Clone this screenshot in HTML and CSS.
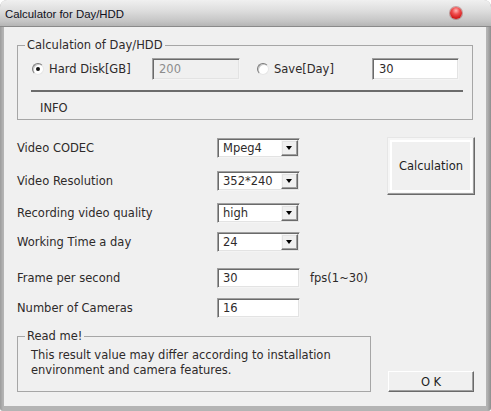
FILE: index.html
```html
<!DOCTYPE html>
<html>
<head>
<meta charset="utf-8">
<link rel="stylesheet" href="styles.css">
</head>
<body>
<div class="window">
  <div class="titlebar">
    <span class="title">Calculator for Day/HDD</span>
    <span class="close"></span>
  </div>
  <div class="content">
    <fieldset class="group calc-group">
      <legend>Calculation of Day/HDD</legend>
      <div class="radio-row">
        <label class="radio-cell first"><span class="radio checked"></span><span class="radio-text">Hard Disk[GB]</span></label>
        <div class="field disabled w88">200</div>
        <label class="radio-cell second"><span class="radio"></span><span class="radio-text">Save[Day]</span></label>
        <div class="field w87">30</div>
      </div>
      <div class="sep"></div>
      <div class="info">INFO</div>
    </fieldset>

    <div class="main">
      <div class="form">
        <div class="row r1"><span class="lbl">Video CODEC</span><div class="select"><span class="val">Mpeg4</span><span class="drop"></span></div></div>
        <div class="row r2"><span class="lbl">Video Resolution</span><div class="select"><span class="val">352*240</span><span class="drop"></span></div></div>
        <div class="row r3"><span class="lbl">Recording video quality</span><div class="select"><span class="val">high</span><span class="drop"></span></div></div>
        <div class="row r4"><span class="lbl">Working Time a day</span><div class="select"><span class="val">24</span><span class="drop"></span></div></div>
        <div class="row r5"><span class="lbl">Frame per second</span><div class="field w83">30</div><span class="unit">fps(1~30)</span></div>
        <div class="row r6"><span class="lbl">Number of Cameras</span><div class="field w83">16</div></div>
      </div>
      <button class="btn calc">Calculation</button>
    </div>

    <div class="bottom">
      <fieldset class="group readme">
        <legend>Read me!</legend>
        <p class="note">This result value may differ according to installation<br>environment and camera features.</p>
      </fieldset>
      <button class="btn ok">O K</button>
    </div>
  </div>
</div>
</body>
</html>
```

FILE: styles.css
```css
* { box-sizing: border-box; }
html, body { margin: 0; padding: 0; background: #ffffff; }
body { font-family: "DejaVu Sans", Verdana, sans-serif; font-size: 11.5px; color: #2e2a2a; }

.window {
  width: 491px;
  height: 411px;
  display: flex;
  flex-direction: column;
  background: linear-gradient(to right, #9c9c9c, #b4b4b4 3px, #b4b4b4 calc(100% - 4px), #8e8e8e);
  border-radius: 7px 7px 3px 3px;
  padding: 0 5px 5px 4px;
}

.titlebar {
  height: 27px;
  margin: 0 -5px 0 -4px;
  padding-left: 5px;
  display: flex;
  align-items: center;
  background: linear-gradient(#f0f0f0 0%, #dedede 40%, #c6c6c6 80%, #b5b5b5 100%);
  border-radius: 7px 7px 0 0;
  border-bottom: 1px solid #8a8a8a;
}
.title {
  font-family: "Liberation Sans", Arial, sans-serif;
  font-size: 11.4px;
  color: #101020;
  padding-top: 1px;
}
.close {
  margin-left: auto;
  margin-right: 29px;
  width: 12px;
  height: 12px;
  border-radius: 50%;
  background: radial-gradient(circle at 50% 30%, #ffb8b8 0%, #f05050 35%, #d01818 75%, #a00000 100%);
  box-shadow: 0 0 0 1px rgba(120, 0, 0, 0.3);
}

.content {
  flex: 1;
  background: #f0f0f0;
  padding: 11px 0 0 13px;
}

.group {
  margin: 0;
  padding: 0;
  border: 1px solid #a6a6a6;
  min-width: 0;
}
.group legend {
  margin-left: 7px;
  padding: 0 2px;
  line-height: 14px;
}
.calc-group { width: 456px; padding-top: 6px; padding-bottom: 4px; }

.radio-row {
  display: flex;
  align-items: center;
  padding-left: 14px;
  height: 22px;
}
.radio-cell { display: flex; align-items: center; }
.radio-cell.first { width: 120px; }
.radio-cell.second { width: 115px; margin-left: 17px; }
.radio {
  width: 12px;
  height: 12px;
  border-radius: 50%;
  border: 1px solid;
  border-color: #7a7a7a #e6e6e6 #e6e6e6 #7a7a7a;
  background: #fff;
  box-shadow: inset 1px 1px 0 #c8c8c8;
  position: relative;
  flex: none;
}
.radio.checked::after {
  content: "";
  position: absolute;
  left: 3px;
  top: 3px;
  width: 4px;
  height: 4px;
  border-radius: 50%;
  background: #111;
}
.radio-text { margin-left: 5px; }

.field {
  height: 22px;
  background: #fff;
  border: 1px solid;
  border-color: #a0a0a0 #f4f4f4 #f4f4f4 #a0a0a0;
  box-shadow: inset 1px 1px 0 #6a6a6a, inset -1px -1px 0 #e3e3e3;
  padding: 0 0 0 6px;
  display: flex;
  align-items: center;
  line-height: 14px;
}
.field.disabled { background: #f0f0f0; color: #8c8c8c; }
.w88 { width: 88px; }
.w87 { width: 87px; }
.w83 { width: 83px; height: 20px; padding-left: 5px; }

.sep {
  margin: 10px 0 0 13px;
  width: 432px;
  height: 2px;
  background: #6c6c6c;
}
.info {
  margin-top: 9px;
  padding-left: 22px;
  line-height: 14px;
}

.main {
  display: flex;
  margin-top: 17px;
  align-items: flex-start;
}
.form { width: 370px; }
.row { display: flex; align-items: center; height: 20px; }
.lbl { width: 200px; }
.r1 { margin-top: 1px; }
.r2 { margin-top: 13px; }
.r3 { margin-top: 12px; }
.r4 { margin-top: 9px; }
.r5 { margin-top: 16px; }
.r6 { margin-top: 10px; }
.unit { margin-left: 10px; }

.select {
  width: 83px;
  height: 20px;
  background: #fff;
  border: 1px solid;
  border-color: #a0a0a0 #f4f4f4 #f4f4f4 #a0a0a0;
  box-shadow: inset 1px 1px 0 #6a6a6a, inset -1px -1px 0 #e3e3e3;
  display: flex;
  align-items: stretch;
  padding: 1px;
}
.select .val { flex: 1; display: flex; align-items: center; padding-left: 4px; }
.select .drop {
  width: 17px;
  background: #f0f0f0;
  border: 1px solid;
  border-color: #f8f8f8 #6a6a6a #6a6a6a #f8f8f8;
  box-shadow: inset -1px -1px 0 #a0a0a0, inset 1px 1px 0 #e3e3e3;
  position: relative;
}
.select .drop::after {
  content: "";
  position: absolute;
  left: 4px;
  top: 5px;
  border-left: 3.5px solid transparent;
  border-right: 3.5px solid transparent;
  border-top: 4px solid #000;
}

.btn {
  font-family: inherit;
  font-size: inherit;
  color: #1e1e1e;
  background: #f0f0f0;
  padding: 0;
  margin: 0;
  cursor: default;
}
.calc {
  width: 88px;
  height: 58px;
  border: 1px solid;
  border-color: #e6e6e6 #6a6a6a #6a6a6a #e6e6e6;
  box-shadow: inset -1px -1px 0 #a0a0a0, inset 0 0 0 2px #f6f6f6, inset 0 0 0 4px #ffffff;
}

.bottom {
  display: flex;
  align-items: flex-end;
  margin-top: 11px;
}
.readme { width: 354px; padding: 5px 0 13px 0; }
.note { margin: 0; padding-left: 13px; line-height: 15px; }
.ok {
  width: 86px;
  height: 21px;
  margin-left: 17px;
  border: 1px solid;
  border-color: #ffffff #6a6a6a #6a6a6a #ffffff;
  box-shadow: inset -1px -1px 0 #a0a0a0;
}
```
